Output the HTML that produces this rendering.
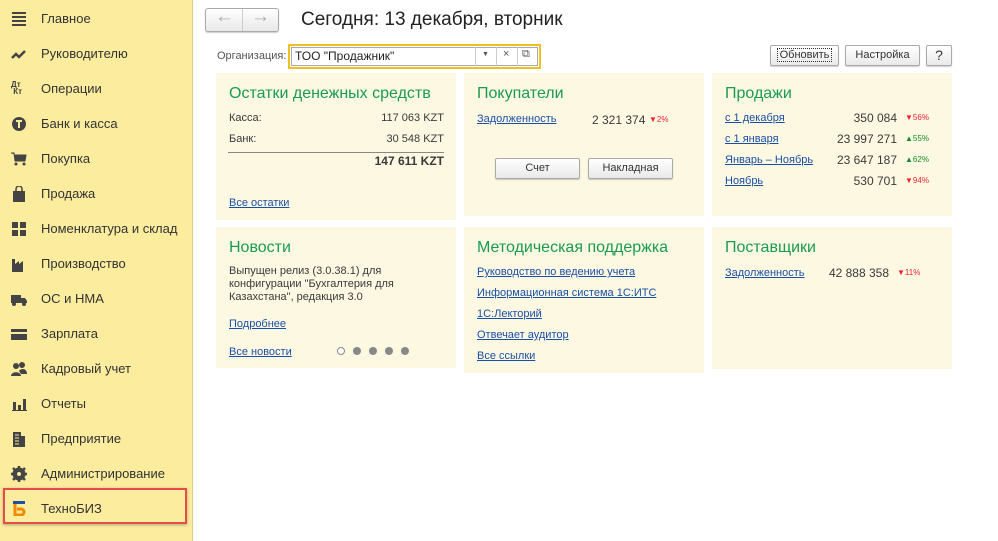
<!DOCTYPE html>
<html><head><meta charset="utf-8"><style>
*{margin:0;padding:0;box-sizing:border-box}
body{width:998px;height:541px;overflow:hidden;background:#fff;font-family:"Liberation Sans",sans-serif;font-size:12px;color:#333;position:relative}
.sb{position:absolute;left:0;top:0;width:193px;height:541px;background:#fbec9e;border-right:1px solid #d9c98a}
.it{position:absolute;left:41px;font-size:13px;color:#333}
.ic{position:absolute;left:11px;width:16px;height:16px}
.red{position:absolute;left:3px;top:488px;width:184px;height:36px;border:2px solid #e84b4b;box-shadow:0 1px 3px rgba(0,0,0,.3)}
.card{position:absolute;background:#fdf8e1}
.h{position:absolute;font-size:16px;color:#1a9b52}
.a{position:absolute;color:#1a4fa8;text-decoration:underline;font-size:11px}
.t{position:absolute;font-size:11px;color:#3a3a3a}
.btn{position:absolute;border:1px solid #aaa;border-radius:2px;background:linear-gradient(#fff,#e9e9e9);font-size:11px;color:#333;text-align:center;box-shadow:0 1px 1px rgba(0,0,0,.2)}
.dn{color:#e23;font-size:8px}.up{color:#128a2a;font-size:8px}
</style></head><body>
<div class="sb">
<svg class="ic" style="top:11px" viewBox="0 0 16 16"><path d="M1 2h14M1 6h14M1 10h14M1 14h14" stroke="#444" stroke-width="2"/></svg><div class="it" style="top:11px">Главное</div>
<svg class="ic" style="top:46px" viewBox="0 0 16 16"><path d="M1 12l4-4 3 3 6-6" stroke="#444" stroke-width="2.5" fill="none"/></svg><div class="it" style="top:46px">Руководителю</div>
<div class="ic" style="top:81px;font-size:8px;font-weight:bold;color:#444;line-height:7px">Дт<br>&nbsp;Кт</div><div class="it" style="top:81px">Операции</div>
<svg class="ic" style="top:116px" viewBox="0 0 16 16"><circle cx="8" cy="8" r="7" fill="#444"/><path d="M5 5h6M8 5v7" stroke="#fbec9e" stroke-width="2"/></svg><div class="it" style="top:116px">Банк и касса</div>
<svg class="ic" style="top:151px" viewBox="0 0 16 16"><path d="M0 2h3l1 8h10l1-6H4" fill="#444" stroke="#444"/><circle cx="5" cy="13" r="1.5" fill="#444"/><circle cx="13" cy="13" r="1.5" fill="#444"/></svg><div class="it" style="top:151px">Покупка</div>
<svg class="ic" style="top:186px" viewBox="0 0 16 16"><rect x="2" y="5" width="12" height="11" fill="#444"/><path d="M5 6V3a3 3 0 016 0v3" stroke="#444" stroke-width="1.5" fill="none"/></svg><div class="it" style="top:186px">Продажа</div>
<svg class="ic" style="top:221px" viewBox="0 0 16 16"><path d="M1 1h6v6H1zM9 1h6v6H9zM1 9h6v6H1zM9 9h6v6H9z" fill="#444"/></svg><div class="it" style="top:221px">Номенклатура и склад</div>
<svg class="ic" style="top:256px" viewBox="0 0 16 16"><path d="M1 16V3h3v5l4-3v3l4-3v11z" fill="#444"/></svg><div class="it" style="top:256px">Производство</div>
<svg class="ic" style="top:291px" viewBox="0 0 16 16"><path d="M0 4h10v8H0zM10 7h4l2 3v2h-6z" fill="#444"/><circle cx="3" cy="13" r="2" fill="#444"/><circle cx="13" cy="13" r="2" fill="#444"/></svg><div class="it" style="top:291px">ОС и НМА</div>
<svg class="ic" style="top:326px" viewBox="0 0 16 16"><path d="M0 3h16v3H0zM0 8h16v6H0z" fill="#444"/></svg><div class="it" style="top:326px">Зарплата</div>
<svg class="ic" style="top:361px" viewBox="0 0 16 16"><circle cx="5" cy="5" r="3" fill="#444"/><circle cx="11" cy="4" r="3" fill="#444"/><path d="M0 15c0-5 10-5 10 0zM8 10c2-3 8-3 8 3h-6z" fill="#444"/></svg><div class="it" style="top:361px">Кадровый учет</div>
<svg class="ic" style="top:396px" viewBox="0 0 16 16"><path d="M2 6h3v8H2zM7 9h3v5H7zM12 3h3v11h-3zM1 14h15v1H1z" fill="#444"/></svg><div class="it" style="top:396px">Отчеты</div>
<svg class="ic" style="top:431px" viewBox="0 0 16 16"><path d="M2 1h8v15H2zM10 5h4v11h-4z" fill="#444"/><path d="M4 4h4M4 7h4M4 10h4M4 13h4" stroke="#fbec9e"/></svg><div class="it" style="top:431px">Предприятие</div>
<svg class="ic" style="top:466px" viewBox="0 0 16 16"><circle cx="8" cy="8" r="5" fill="none" stroke="#444" stroke-width="3"/><path d="M8 0v16M0 8h16M2 2l12 12M14 2L2 14" stroke="#444" stroke-width="2.5"/><circle cx="8" cy="8" r="2" fill="#fbec9e"/></svg><div class="it" style="top:466px">Администрирование</div>
<div class="red"></div>
<svg class="ic" style="top:500px" viewBox="0 0 16 16"><rect x="2" y="1" width="12" height="3" fill="#1e4fa0"/><path d="M4 4v11h6a3 3 0 000-6H6" stroke="#f08a00" stroke-width="3" fill="none"/></svg><div class="it" style="top:501px">ТехноБИЗ</div>
</div>

<div class="btn" style="left:205px;top:8px;width:74px;height:24px;border-radius:3px"></div>
<div style="position:absolute;left:242px;top:9px;width:1px;height:22px;background:#ccc"></div>
<div style="position:absolute;left:215px;top:6px;font-size:19px;color:#aaa;font-weight:bold">←</div>
<div style="position:absolute;left:251px;top:6px;font-size:19px;color:#aaa;font-weight:bold">→</div>
<div style="position:absolute;left:301px;top:9px;font-size:19px;color:#222">Сегодня: 13 декабря, вторник</div>

<div class="t" style="left:217px;top:50px;color:#555">Организация:</div>
<div style="position:absolute;left:288px;top:44px;width:253px;height:25px;border:2px solid #f0c020"></div>
<div style="position:absolute;left:291px;top:47px;width:247px;height:19px;border:1px solid #aaa;background:#fff"></div>
<div style="position:absolute;left:295px;top:49px;font-size:12px;color:#222">ТОО "Продажник"</div>
<div style="position:absolute;left:475px;top:47px;width:1px;height:19px;background:#ccc"></div>
<div style="position:absolute;left:496px;top:47px;width:1px;height:19px;background:#ccc"></div>
<div style="position:absolute;left:517px;top:47px;width:1px;height:19px;background:#ccc"></div>
<div style="position:absolute;left:482px;top:51px;font-size:7px;color:#555">▼</div>
<div style="position:absolute;left:503px;top:48px;font-size:11px;color:#555">×</div>
<div style="position:absolute;left:522px;top:48px;font-size:11px;color:#555">⧉</div>

<div class="btn" style="left:770px;top:45px;width:69px;height:21px;line-height:19px"><span style="outline:1px dotted #333;padding:0 2px">Обновить</span></div>
<div class="btn" style="left:845px;top:45px;width:75px;height:21px;line-height:19px">Настройка</div>
<div class="btn" style="left:926px;top:45px;width:26px;height:21px;line-height:19px;font-size:14px">?</div>

<div class="card" style="left:216px;top:73px;width:240px;height:147px"></div>
<div class="h" style="left:229px;top:85px">Остатки денежных средств</div>
<div class="t" style="left:229px;top:112px">Касса:</div><div class="t" style="left:354px;top:112px;width:90px;text-align:right">117 063 KZT</div>
<div class="t" style="left:229px;top:133px">Банк:</div><div class="t" style="left:354px;top:133px;width:90px;text-align:right">30 548 KZT</div>
<div style="position:absolute;left:228px;top:152px;width:216px;height:1px;background:#888"></div>
<div class="t" style="left:344px;top:154px;width:100px;text-align:right;font-weight:bold;font-size:12px">147 611 KZT</div>
<div class="a" style="left:229px;top:197px">Все остатки</div>

<div class="card" style="left:464px;top:73px;width:240px;height:143px"></div>
<div class="h" style="left:477px;top:85px">Покупатели</div>
<div class="a" style="left:477px;top:113px">Задолженность</div>
<div class="t" style="left:592px;top:113px;font-size:12px">2 321 374</div><div class="dn" style="position:absolute;left:649px;top:115px">▼2%</div>
<div class="btn" style="left:495px;top:158px;width:85px;height:21px;line-height:19px">Счет</div>
<div class="btn" style="left:588px;top:158px;width:85px;height:21px;line-height:19px">Накладная</div>

<div class="card" style="left:712px;top:73px;width:240px;height:143px"></div>
<div class="h" style="left:725px;top:85px">Продажи</div>
<div class="a" style="left:725px;top:112px">с 1 декабря</div><div class="t" style="left:800px;top:111px;width:97px;text-align:right;font-size:12px">350 084</div><div class="dn" style="position:absolute;left:905px;top:113px">▼56%</div>
<div class="a" style="left:725px;top:133px">с 1 января</div><div class="t" style="left:800px;top:132px;width:97px;text-align:right;font-size:12px">23 997 271</div><div class="up" style="position:absolute;left:905px;top:134px">▲55%</div>
<div class="a" style="left:725px;top:154px">Январь – Ноябрь</div><div class="t" style="left:800px;top:153px;width:97px;text-align:right;font-size:12px">23 647 187</div><div class="up" style="position:absolute;left:905px;top:155px">▲62%</div>
<div class="a" style="left:725px;top:175px">Ноябрь</div><div class="t" style="left:800px;top:174px;width:97px;text-align:right;font-size:12px">530 701</div><div class="dn" style="position:absolute;left:905px;top:176px">▼94%</div>

<div class="card" style="left:216px;top:227px;width:240px;height:141px"></div>
<div class="h" style="left:229px;top:239px">Новости</div>
<div class="t" style="left:229px;top:265px;line-height:13px">Выпущен релиз (3.0.38.1) для<br>конфигурации "Бухгалтерия для<br>Казахстана", редакция 3.0</div>
<div class="a" style="left:229px;top:318px">Подробнее</div>
<div class="a" style="left:229px;top:346px">Все новости</div>
<div style="position:absolute;left:337px;top:347px;width:8px;height:8px;border:1px solid #888;border-radius:50%;background:#fff"></div>
<div style="position:absolute;left:353px;top:347px;width:8px;height:8px;border-radius:50%;background:#888;box-shadow:16px 0 #888,32px 0 #888,48px 0 #888"></div>

<div class="card" style="left:464px;top:227px;width:240px;height:146px"></div>
<div class="h" style="left:477px;top:239px">Методическая поддержка</div>
<div class="a" style="left:477px;top:266px">Руководство по ведению учета</div>
<div class="a" style="left:477px;top:287px">Информационная система 1С:ИТС</div>
<div class="a" style="left:477px;top:308px">1С:Лекторий</div>
<div class="a" style="left:477px;top:329px">Отвечает аудитор</div>
<div class="a" style="left:477px;top:350px">Все ссылки</div>

<div class="card" style="left:712px;top:227px;width:240px;height:142px"></div>
<div class="h" style="left:725px;top:239px">Поставщики</div>
<div class="a" style="left:725px;top:267px">Задолженность</div>
<div class="t" style="left:800px;top:266px;width:89px;text-align:right;font-size:12px">42 888 358</div><div class="dn" style="position:absolute;left:897px;top:268px">▼11%</div>
</body></html>
